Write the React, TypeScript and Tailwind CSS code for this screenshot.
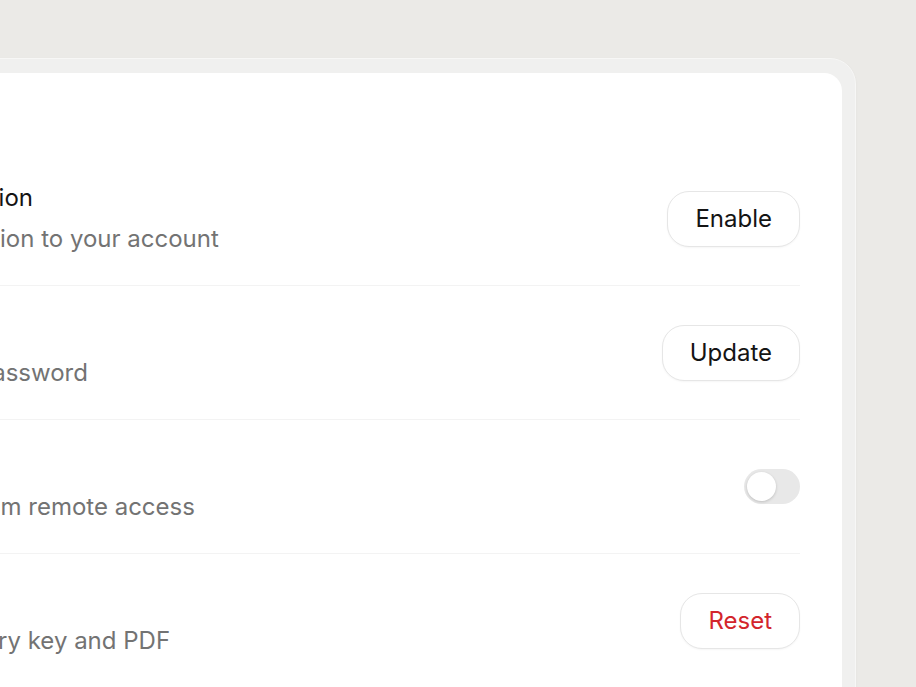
import React from "react";

const font = { fontFamily: "Inter, 'Noto Sans', sans-serif" };

function Btn({ label, danger }: { label: string; danger?: boolean }) {
  return (
    <button
      className={
        "h-[56px] px-[27px] rounded-[22px] bg-white border border-[#e6e6e6] text-[24px] leading-none shadow-[0_1px_2px_rgba(0,0,0,0.04)] " +
        (danger ? "text-[#d3252c]" : "text-[#141414]")
      }
    >
      {label}
    </button>
  );
}

function Toggle() {
  return (
    <div className="w-[56px] h-[35px] rounded-full bg-[#e8e8e8] flex items-center px-[3px]">
      <div className="w-[29px] h-[29px] rounded-full bg-white shadow-[0_1px_3px_rgba(0,0,0,0.18)]" />
    </div>
  );
}

function Row({
  title,
  sub,
  children,
}: {
  title: string;
  sub: string;
  children: React.ReactNode;
}) {
  return (
    <div className="h-[134px] flex items-center justify-between border-b border-[#f3f3f3]">
      <div className="flex flex-col gap-[9px] whitespace-nowrap">
        <div className="text-[24px] leading-[32px] text-[#141414]">{title}</div>
        <div className="text-[24px] leading-[32px] text-[#737373]">{sub}</div>
      </div>
      {children}
    </div>
  );
}

export default function App() {
  return (
    <div
      className="w-[916px] h-[687px] overflow-hidden bg-[#ebeae7] flex justify-end pt-[58px] pr-[60px]"
      style={font}
    >
      <div className="shrink-0 w-[1100px] h-[760px] rounded-[26px] bg-[#f0f0ef] border border-[#f7f7f6] px-[13px] pt-[14px] shadow-[0_1px_3px_rgba(0,0,0,0.04)]">
        <div className="bg-white rounded-[18px] h-full pt-[79px] pr-[42px] pl-[55px]">
          <Row title="2-step verification" sub="Add full protection to your account">
            <Btn label="Enable" />
          </Row>
          <Row title="Password" sub="Change your password">
            <Btn label="Update" />
          </Row>
          <Row title="Remote lock" sub="Lock device from remote access">
            <Toggle />
          </Row>
          <Row title="Recovery" sub="Get one recovery key and PDF">
            <Btn label="Reset" danger />
          </Row>
        </div>
      </div>
    </div>
  );
}
